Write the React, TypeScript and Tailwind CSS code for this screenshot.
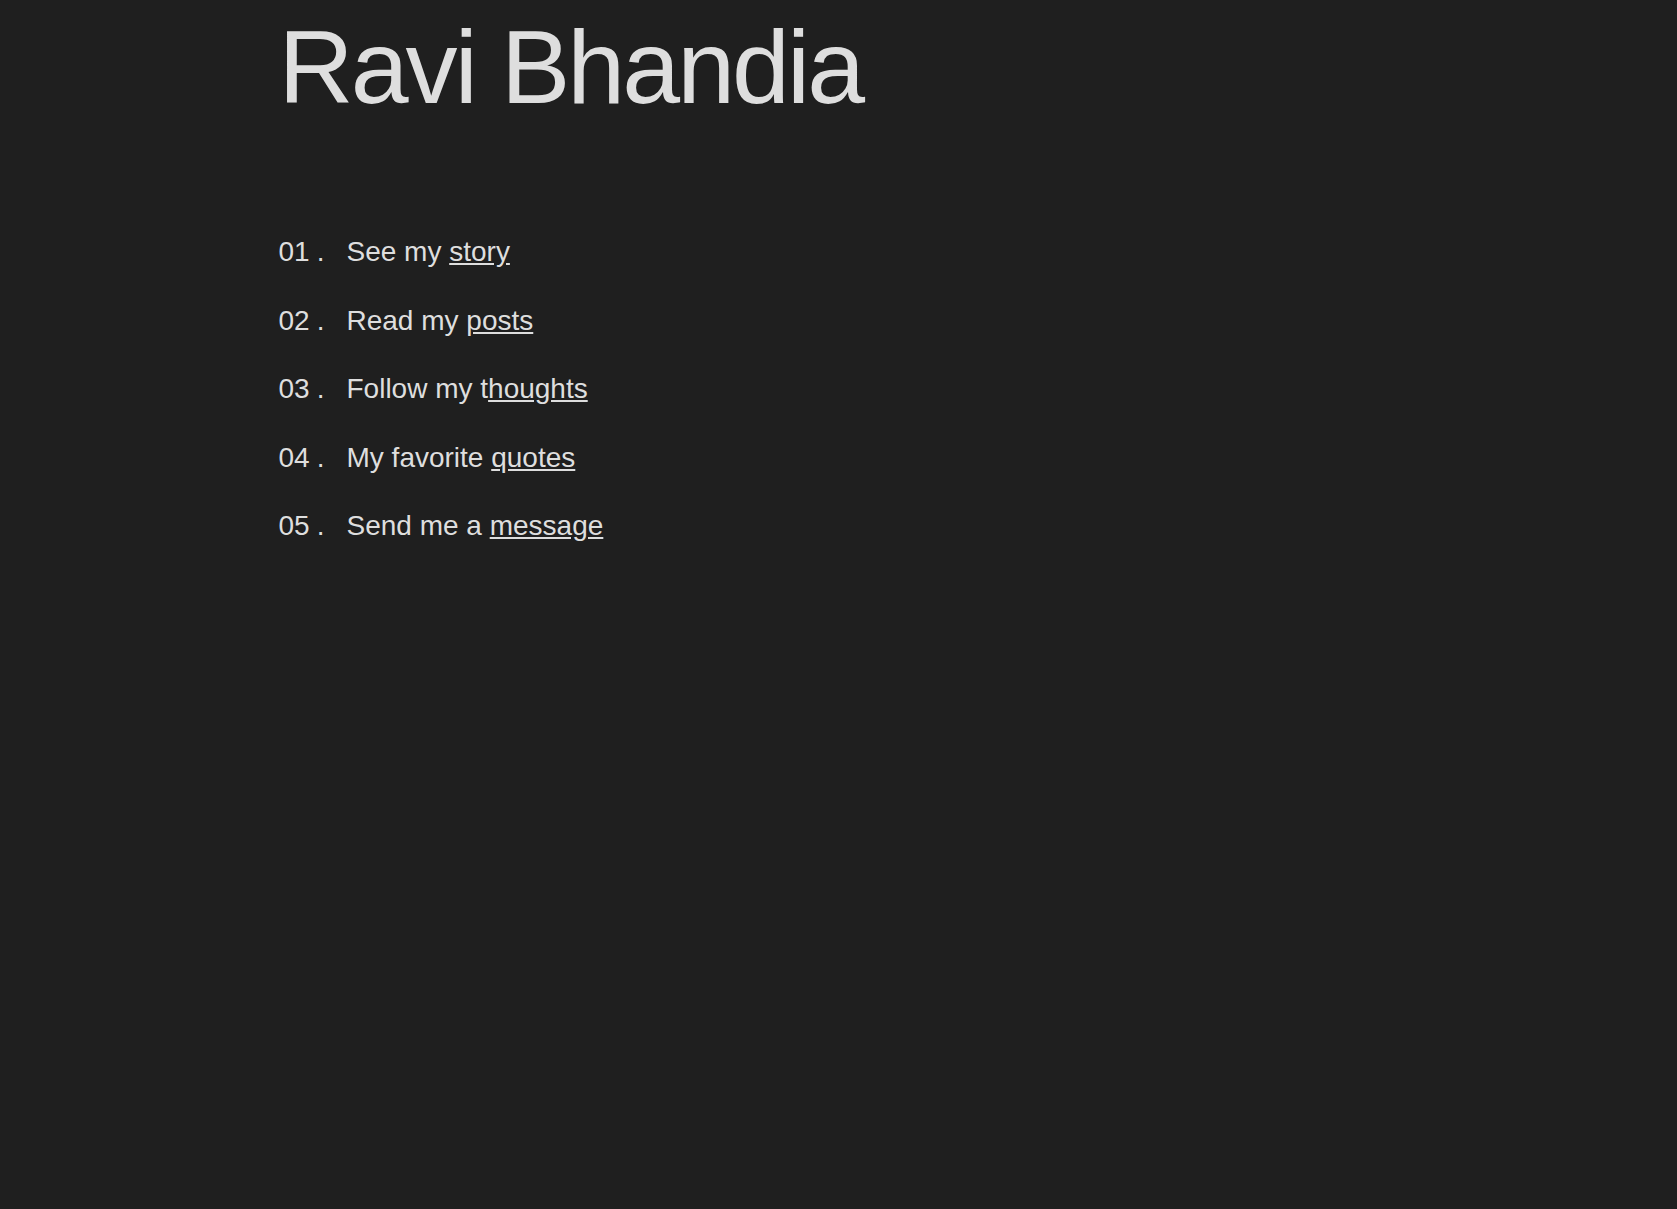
import React from "react";

const items: { n: string; pre: string; link: string }[] = [
  { n: "01", pre: "See my ", link: "story" },
  { n: "02", pre: "Read my ", link: "posts" },
  { n: "03", pre: "Follow my t", link: "houghts" },
  { n: "04", pre: "My favorite ", link: "quotes" },
  { n: "05", pre: "Send me a ", link: "message" },
];

export default function App() {
  return (
    <div
      className="min-h-[1209px] w-full bg-[#1f1f1f] text-[#dedede]"
      style={{ fontFamily: '"Liberation Sans", Arial, sans-serif' }}
    >
      <div className="mx-auto max-w-[1120px]">
        <h1 className="pt-[15px] text-[104px] leading-[104px] tracking-[-0.028em] font-normal">
          Ravi Bhandia
        </h1>
        <ul className="mt-[112px] flex flex-col gap-[26.5px]">
          {items.map((it) => (
            <li key={it.n} className="flex text-[28px] leading-[42px]">
              <span className="w-[68px] shrink-0">
                <span>{it.n}</span>
                <span className="ml-[7px]">.</span>
              </span>
              <span>
                {it.pre}
                <a href="#" className="underline">
                  {it.link}
                </a>
              </span>
            </li>
          ))}
        </ul>
      </div>
    </div>
  );
}
